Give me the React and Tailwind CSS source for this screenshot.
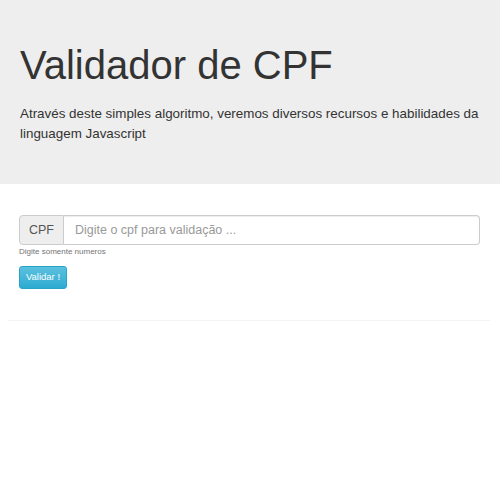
import React from "react";

const App = () => {
  return (
    <div className="min-h-[500px] bg-white font-['Liberation_Sans',Arial,sans-serif] text-[#333]">
      <div className="bg-[#eeeeee] px-5 pt-[41px] pb-[40px]">
        <h1 className="text-[40px] leading-[48px] font-normal text-[#333]">Validador de CPF</h1>
        <p className="mt-[15px] text-[13.4px] leading-[20px] text-[#333]">
          Através deste simples algoritmo, veremos diversos recursos e habilidades da linguagem Javascript
        </p>
      </div>

      <div className="px-[8px]">
        <div className="pl-[11px] pr-[12px] pt-[31px] pb-[31px]">
          <div className="flex h-[30px] w-full">
            <span className="flex w-[45px] items-center justify-center rounded-l-[4px] border border-[#ccc] bg-[#eee] text-[12.5px] text-[#555]">
              CPF
            </span>
            <input
              type="text"
              placeholder="Digite o cpf para validação ..."
              className="min-w-0 flex-1 rounded-r-[4px] border border-l-0 border-[#ccc] px-[11px] text-[12.5px] text-[#555] outline-none placeholder:text-[#999] shadow-[inset_0_1px_1px_rgba(0,0,0,0.075)]"
            />
          </div>
          <p className="mt-[1px] text-[8px] leading-[12px] text-[#737373]">Digite somente numeros</p>
          <button className="mt-[8px] h-[23px] w-[48px] rounded-[3px] border border-[#28a4c9] bg-gradient-to-b from-[#5bc0de] to-[#2aabd2] text-[9.5px] text-white">
            Validar !
          </button>
        </div>
        <hr className="mr-[2px] border-t border-[#f3f3f3]" />
      </div>
    </div>
  );
};

export default App;
